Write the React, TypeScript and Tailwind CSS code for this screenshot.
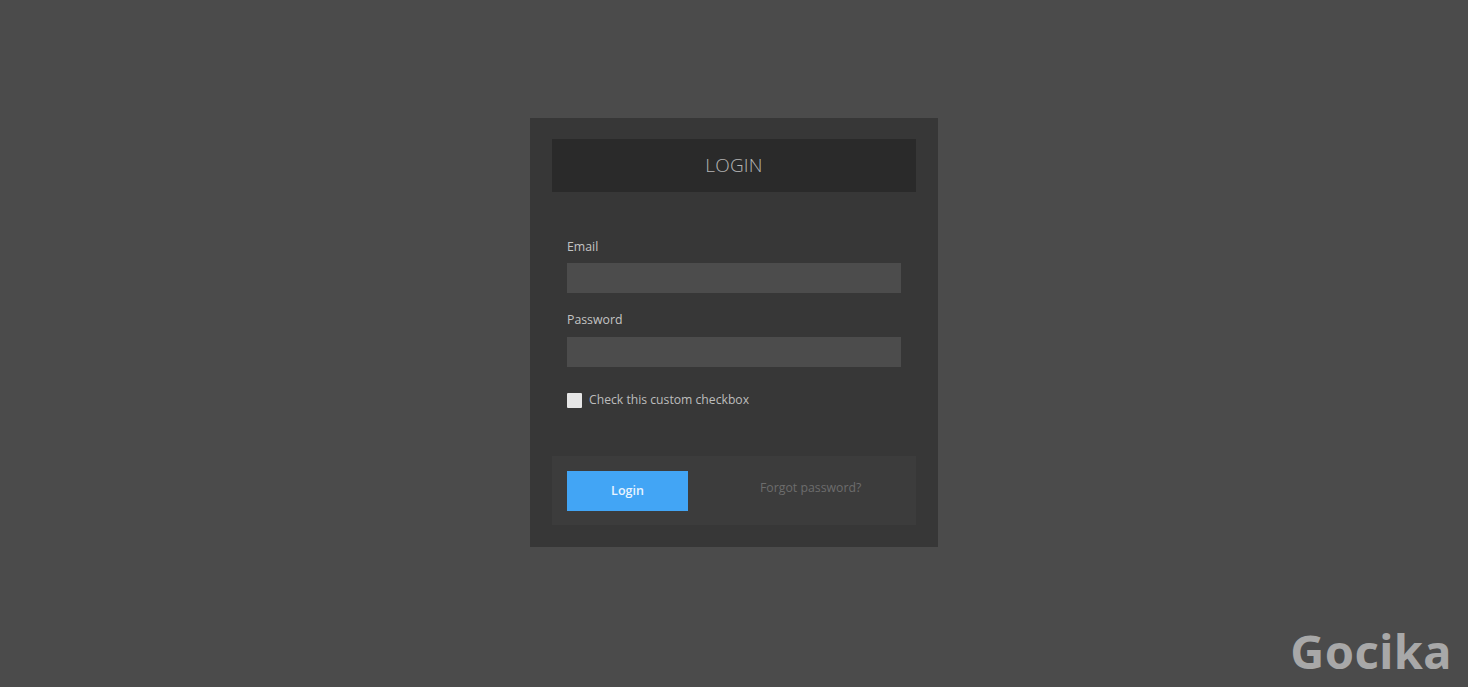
import React from 'react';

export default function App() {
  return (
    <div className="relative min-h-screen bg-[#4b4b4b] font-['Open_Sans',sans-serif] overflow-hidden">
      <div className="flex justify-center pt-[118px]">
        <div className="w-[408px] bg-[#373737] px-[22px] pt-[21px] pb-[22px]">
          {/* Header */}
          <div className="h-[53px] bg-[#2a2a2a] flex items-center justify-center">
            <h1 className="text-[19px] font-light text-[#b5b5b5] tracking-[0.01em]">LOGIN</h1>
          </div>

          {/* Form */}
          <form className="px-[15px] pt-[46px]" onSubmit={(e) => e.preventDefault()}>
            <label className="block text-[12.3px] leading-[18px] text-[#c4c4c4] mb-[7px]">Email</label>
            <input type="email" className="block w-full h-[30px] bg-[#4c4c4c] outline-none text-sm text-white px-2" />

            <label className="block text-[12.3px] leading-[18px] text-[#c4c4c4] mt-[18px] mb-[8px]">Password</label>
            <input type="password" className="block w-full h-[30px] bg-[#4c4c4c] outline-none text-sm text-white px-2" />

            <div className="flex items-center gap-[7px] mt-[26px] h-[15px]">
              <span className="w-[15px] h-[15px] bg-[#e6e6e6] rounded-[1px] shrink-0" />
              <span className="text-[12.2px] text-[#bdbdbd]">Check this custom checkbox</span>
            </div>
          </form>

          {/* Footer */}
          <div className="mt-[48px] h-[69px] bg-[#3c3c3c] px-[15px] pt-[15px] flex items-start">
            <button className="w-[121px] h-[40px] bg-[#42a5f5] text-[12.5px] font-semibold text-[#e8f4ff]">
              Login
            </button>
            <span className="ml-[72px] mt-[8px] text-[12.3px] text-[#6c6c6c]">Forgot password?</span>
          </div>
        </div>
      </div>

      <div className="absolute right-[16px] bottom-[6px] text-[47px] font-bold text-[#a8a8a8] font-['Noto_Sans',sans-serif] tracking-[0.01em] leading-none pb-[6px]">
        Gocika
      </div>
    </div>
  );
}
